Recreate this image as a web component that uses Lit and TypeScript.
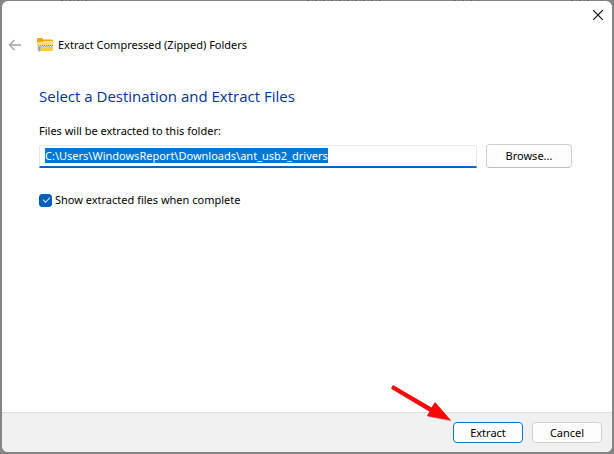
import { LitElement, html, css } from "lit";
import { customElement, query } from "lit/decorators.js";

@customElement("app-root")
export class AppRoot extends LitElement {
  static styles = css`
    :host {
      display: block;
      font: 11px/16px "Noto Sans", "Open Sans", sans-serif;
      color: #000;
    }
    * {
      box-sizing: border-box;
    }
    .desktop {
      position: relative;
      min-height: 100vh;
      padding: 1px 2px 2px;
      display: flex;
      background: #858585;
    }
    .trace {
      position: absolute;
      top: 0;
      height: 1px;
      background: repeating-linear-gradient(90deg, #666 0 2px, #858585 2px 5px, #6c6c78 5px 6px, #858585 6px 8px);
    }
    .trace.a { left: 10%; width: 5%; }
    .trace.b { left: 50%; width: 12%; }
    .trace.c { left: 74%; width: 4%; }
    .trace.d { left: 93%; width: 3%; }
    .dialog {
      flex: 1;
      display: flex;
      flex-direction: column;
      background: #fff;
      border-radius: 6px;
      overflow: hidden;
    }
    .titlebar {
      display: flex;
      justify-content: flex-end;
      height: 28px;
    }
    .close,
    .back {
      display: grid;
      place-items: center;
      padding: 0;
      border: 0;
      background: none;
    }
    .close {
      width: 28px;
    }
    .header {
      display: flex;
      align-items: center;
      height: 32px;
      padding-left: 6px;
    }
    .back {
      width: 14px;
      height: 16px;
      margin-right: 15px;
    }
    .caption {
      margin: 0 0 0 5px;
      font-size: 11px;
      font-weight: 400;
    }
    .content {
      flex: 1;
      padding: 24px 40px 24px 37px;
    }
    h2 {
      margin: 0 0 16px;
      font-family: "Open Sans", "Noto Sans", sans-serif;
      font-size: 15px;
      line-height: 22px;
      font-weight: 400;
      color: #003399;
    }
    .label {
      display: block;
      margin-bottom: 5px;
    }
    .row {
      display: flex;
      align-items: center;
      gap: 9px;
    }
    .path {
      flex: 1;
      min-width: 0;
      height: 23px;
      padding: 0 5px;
      border: 1px solid #e5e8ec;
      border-bottom: 2px solid #0067c0;
      border-radius: 2px 2px 0 0;
      outline: 0;
      font: inherit;
      background: #fff;
    }
    .path::selection {
      color: #fff;
      background: #0078d7;
    }
    .button {
      height: 21px;
      padding: 0;
      border: 1px solid #d0d0d0;
      border-radius: 4px;
      background: #fdfdfd;
      font: inherit;
      color: #000;
    }
    .browse {
      width: 86px;
      height: 24px;
      border-bottom-color: #bcbcbc;
    }
    .option {
      display: flex;
      align-items: center;
      gap: 3px;
      margin-top: 24px;
    }
    .check {
      position: relative;
      appearance: none;
      width: 13px;
      height: 13px;
      margin: 0;
      border-radius: 3px;
      border: 1px solid #8a8a8a;
    }
    .check:checked {
      border-color: #005fb8;
      background: #005fb8;
    }
    .check:checked::after {
      content: "";
      position: absolute;
      left: 3px;
      top: 2px;
      width: 6px;
      height: 3px;
      border: solid #d4e6f7;
      border-width: 0 0 1px 1px;
      transform: rotate(-45deg);
    }
    .footer {
      position: relative;
      display: flex;
      justify-content: flex-end;
      gap: 9px;
      padding: 9px 10px;
      border-top: 1px solid #dfdfdf;
      background: #f0f0f0;
    }
    .footer .button {
      width: 70px;
    }
    .footer .primary {
      border-color: #0078d4;
    }
    .arrow {
      position: absolute;
      right: 159px;
      bottom: 30px;
    }
  `;

  @query(".path") private path!: HTMLInputElement;

  firstUpdated() {
    this.path.focus();
    this.path.select();
  }

  render() {
    return html`
      <div class="desktop">
        <span class="trace a"></span><span class="trace b"></span>
        <span class="trace c"></span><span class="trace d"></span>
        <main class="dialog">
          <div class="titlebar">
            <button class="close" aria-label="Close">
              <svg width="10" height="10" viewBox="0 0 10 10" stroke="#111" stroke-width="1.2">
                <path d="M0 0L10 10M10 0L0 10" />
              </svg>
            </button>
          </div>
          <header class="header">
            <button class="back" aria-label="Back">
              <svg width="14" height="12" viewBox="0 0 14 12" fill="none" stroke="#a3a3a3" stroke-width="1.3">
                <path d="M13 6H1.5M6.5 1L1.5 6L6.5 11" />
              </svg>
            </button>
            <svg width="16" height="16" viewBox="0 0 16 16" aria-hidden="true">
              <defs>
                <linearGradient id="front" x1="0" y1="0" x2="0" y2="1">
                  <stop offset="0" stop-color="#ffe48a" />
                  <stop offset="1" stop-color="#fbc534" />
                </linearGradient>
              </defs>
              <path d="M0 2.3Q0 1 1.3 1H5L6.5 2.5H14.7Q16 2.5 16 3.8V8H0Z" fill="#eda60b" />
              <path d="M0 6Q0 5 1 5H5.5L6.8 4H15Q16 4 16 5V12.8Q16 14 14.8 14H1.2Q0 14 0 12.8Z" fill="url(#front)" />
              <path d="M0 8H16V10H0Z" fill="#e9e4d2" />
              <path d="M1 8.5H16" stroke="#777" stroke-width="1" stroke-dasharray="1 1" />
              <path d="M2 9.5H16" stroke="#aaa49a" stroke-width="1" stroke-dasharray="1 1" />
              <path d="M0 10H4V14H0Z" fill="#e6e2d6" />
              <path d="M1 9H4V13L2.5 15L1 13Z" fill="#9a9a9a" stroke="#dedede" stroke-width=".8" />
            </svg>
            <h1 class="caption">Extract Compressed (Zipped) Folders</h1>
          </header>
          <section class="content">
            <h2>Select a Destination and Extract Files</h2>
            <label class="label" for="path">Files will be extracted to this folder:</label>
            <div class="row">
              <input class="path" id="path" type="text" spellcheck="false"
                value="C:\\Users\\WindowsReport\\Downloads\\ant_usb2_drivers" />
              <button class="button browse">Browse...</button>
            </div>
            <label class="option">
              <input class="check" type="checkbox" checked />
              <span>Show extracted files when complete</span>
            </label>
          </section>
          <footer class="footer">
            <svg class="arrow" width="64" height="38" viewBox="0 0 64 38" aria-hidden="true">
              <path d="M4 1L42.5 23.5L46 18L62 36.5L38 32L40.5 27.5L2 4.5Z" fill="#777" opacity=".45" transform="translate(.7 .9)" />
              <path d="M4 1L42.5 23.5L46 18L62 36.5L38 32L40.5 27.5L2 4.5Z" fill="#fa0505" />
            </svg>
            <button class="button primary">Extract</button>
            <button class="button">Cancel</button>
          </footer>
        </main>
      </div>
    `;
  }
}
